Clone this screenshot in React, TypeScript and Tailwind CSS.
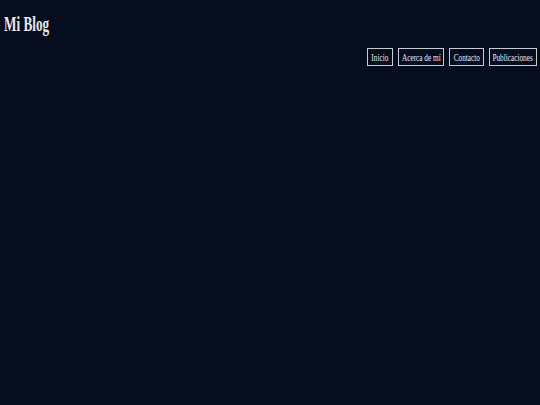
const links = [
  { label: "Inicio", w: "w-[26px]" },
  { label: "Acerca de mí", w: "w-[46px]" },
  { label: "Contacto", w: "w-[35px]" },
  { label: "Publicaciones", w: "w-[48px]" },
];

export default function App() {
  return (
    <div className="min-h-screen w-full bg-[#060d1f] font-['Liberation_Serif',serif] text-[#e6e8ee]">
      <header className="flex flex-col pl-[4px] pr-[3px] pt-[12px]">
        <h1 className="text-[20px] font-bold leading-[24px]">
          <span className="inline-block origin-left scale-x-[0.66]">Mi Blog</span>
        </h1>
        <nav className="mt-[12px] flex justify-end gap-[5px]">
          {links.map((l) => (
            <a
              key={l.label}
              href="#"
              className={`flex h-[18px] ${l.w} items-center justify-center border border-[#c9ccd4] text-[11px] leading-none`}
            >
              <span className="inline-block scale-x-[0.66] whitespace-nowrap">{l.label}</span>
            </a>
          ))}
        </nav>
      </header>
    </div>
  );
}
